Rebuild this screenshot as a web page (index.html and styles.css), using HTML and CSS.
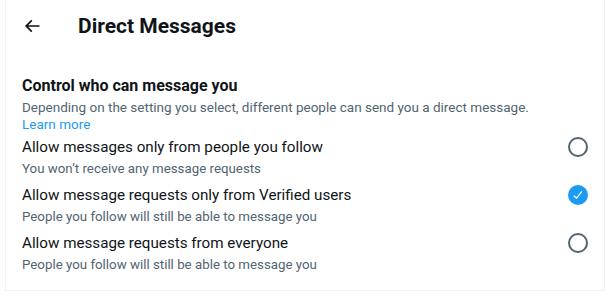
FILE: index.html
```html
<!DOCTYPE html>
<html>
<head>
<meta charset="utf-8">
<link rel="stylesheet" href="styles.css">
</head>
<body>
<div class="panel">
  <header class="header">
    <button class="back" aria-label="Back">
      <svg viewBox="0 0 24 24" width="20" height="20"><path d="M7.414 13l5.043 5.04-1.414 1.42L3.586 12l7.457-7.46 1.414 1.42L7.414 11H21v2H7.414z" fill="#0f1419"/></svg>
    </button>
    <h1 class="title">Direct Messages</h1>
  </header>
  <section class="section">
    <h2 class="section-title">Control who can message you</h2>
    <p class="section-desc">Depending on the setting you select, different people can send you a direct message. <a class="link" href="#">Learn more</a></p>
    <div class="options">
      <label class="option">
        <div class="option-text">
          <div class="option-label">Allow messages only from people you follow</div>
          <div class="option-sub">You won’t receive any message requests</div>
        </div>
        <span class="radio"></span>
      </label>
      <label class="option">
        <div class="option-text">
          <div class="option-label">Allow message requests only from Verified users</div>
          <div class="option-sub">People you follow will still be able to message you</div>
        </div>
        <span class="radio checked">
          <svg viewBox="0 0 24 24" width="14" height="14"><path d="M9.64 18.952l-5.55-4.861 1.317-1.504 3.951 3.459 8.459-10.948L19.4 6.32 9.64 18.952z" fill="#fff"/></svg>
        </span>
      </label>
      <label class="option">
        <div class="option-text">
          <div class="option-label">Allow message requests from everyone</div>
          <div class="option-sub">People you follow will still be able to message you</div>
        </div>
        <span class="radio"></span>
      </label>
    </div>
  </section>
</div>
</body>
</html>
```

FILE: styles.css
```css
* { box-sizing: border-box; }
html, body { margin: 0; padding: 0; background: #fff; }
body {
  font-family: Roboto, "Noto Sans", "Liberation Sans", sans-serif;
  color: #0f1419;
}
.panel {
  margin-left: 5px;
  width: 600px;
  border-left: 1px solid #eff3f4;
  border-right: 1px solid #eff3f4;
  border-bottom: 1px solid #eff3f4;
}
.header {
  display: flex;
  align-items: center;
  height: 52px;
  padding: 0 16px;
}
.back {
  width: 20px;
  height: 20px;
  border: none;
  background: none;
  padding: 0;
  display: flex;
  align-items: center;
  justify-content: center;
  margin-left: 0;
  margin-right: 36px;
}
.title {
  margin: 0;
  font-size: 21px;
  font-weight: 700;
  line-height: 24px;
}
.section {
  padding: 24px 16px 13px 16px;
}
.section-title {
  margin: 0;
  font-size: 16px;
  font-weight: 700;
  line-height: 20px;
}
.section-desc {
  margin: 3px 0 0 0;
  font-size: 13.5px;
  line-height: 17px;
  color: #536471;
}
.link {
  display: block;
  color: #1d9bf0;
  text-decoration: none;
}
.option {
  display: flex;
  align-items: flex-start;
  justify-content: space-between;
  padding: 4px 0;
}
.option-label {
  font-size: 15.2px;
  line-height: 20px;
}
.option-sub {
  margin-top: 4px;
  font-size: 13.3px;
  line-height: 16px;
  color: #536471;
}
.radio {
  width: 20px;
  height: 20px;
  margin-top: 0;
  border-radius: 50%;
  border: 2px solid #536471;
  display: flex;
  align-items: center;
  justify-content: center;
}
.radio.checked {
  border: none;
  background: #1d9bf0;
}
```
